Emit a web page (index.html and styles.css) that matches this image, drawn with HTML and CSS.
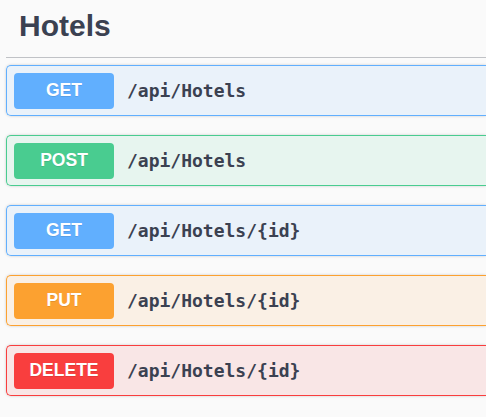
FILE: index.html
```html
<!DOCTYPE html>
<html>
<head>
<meta charset="utf-8">
<link rel="stylesheet" href="styles.css">
</head>
<body>
<div class="tag">
  <h3 class="tag-title">Hotels</h3>
  <div class="ops">
    <div class="op op-get"><span class="method">GET</span><span class="path">/api/Hotels</span></div>
    <div class="op op-post"><span class="method">POST</span><span class="path">/api/Hotels</span></div>
    <div class="op op-get"><span class="method">GET</span><span class="path">/api/Hotels/{id}</span></div>
    <div class="op op-put"><span class="method">PUT</span><span class="path">/api/Hotels/{id}</span></div>
    <div class="op op-delete"><span class="method">DELETE</span><span class="path">/api/Hotels/{id}</span></div>
  </div>
</div>
</body>
</html>
```
FILE: styles.css
```css
html, body {
  margin: 0;
  padding: 0;
  background: #fafafa;
  overflow: hidden;
}
body {
  width: 486px;
  height: 417px;
}
.tag {
  padding-left: 6px;
}
.tag-title {
  margin: 0;
  height: 58px;
  box-sizing: border-box;
  padding: 8px 0 0 13px;
  font-family: "Liberation Sans", Arial, sans-serif;
  font-weight: 700;
  font-size: 30px;
  line-height: 36px;
  color: #3b4151;
  border-bottom: 1px solid rgba(59, 65, 81, 0.3);
}
.ops {
  padding-top: 7px;
}
.op {
  display: flex;
  align-items: center;
  height: 51px;
  box-sizing: border-box;
  margin-bottom: 19px;
  padding: 0 7px;
  border: 1px solid;
  border-right: none;
  border-radius: 5px 0 0 5px;
  box-shadow: 0 0 3px rgba(0, 0, 0, 0.19);
}
.method {
  width: 100px;
  height: 36px;
  flex: none;
  display: flex;
  align-items: center;
  justify-content: center;
  border-radius: 4px;
  color: #fff;
  font-family: "Liberation Sans", Arial, sans-serif;
  font-weight: 700;
  font-size: 17.5px;
  text-shadow: 0 1px 0 rgba(0, 0, 0, 0.1);
}
.path {
  margin-left: 13px;
  font-family: "DejaVu Sans Mono", "Liberation Mono", monospace;
  font-weight: 700;
  font-size: 18px;
  color: #3b4151;
}
.op-get { border-color: #61affe; background: rgba(97, 175, 254, 0.1); }
.op-get .method { background: #61affe; }
.op-post { border-color: #49cc90; background: rgba(73, 204, 144, 0.1); }
.op-post .method { background: #49cc90; }
.op-put { border-color: #fca130; background: rgba(252, 161, 48, 0.1); }
.op-put .method { background: #fca130; }
.op-delete { border-color: #f93e3e; background: rgba(249, 62, 62, 0.1); }
.op-delete .method { background: #f93e3e; }
```
